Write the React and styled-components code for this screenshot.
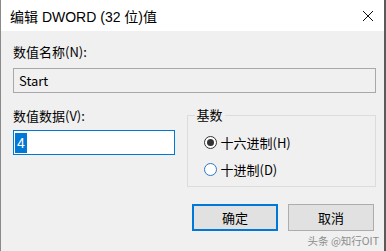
import React from 'react';
import styled, {createGlobalStyle} from 'styled-components';

const GlobalStyle = createGlobalStyle`
    html, body {
        margin: 0;
        padding: 0;
        background: #f0f0f0;
    }
    body {
        font-family: "Microsoft YaHei", "Noto Sans CJK SC", "Liberation Sans", sans-serif;
        font-size: 13px;
        color: #000;
    }
`

const Window = styled.div`
    width: 386px;
    height: 251px;
    box-sizing: border-box;
    border-left: 1px solid #8a8a8a;
    border-right: 2px solid #5a5a5a;
    background: #f0f0f0;
    display: flex;
    flex-direction: column;
    overflow: hidden;
`

const TitleBar = styled.div`
    height: 31px;
    background: #fff;
    display: flex;
    align-items: center;
    justify-content: space-between;
    padding: 0 10px 0 9px;
    flex-shrink: 0;
`

const Title = styled.span`
    font-size: 14px;
    font-family: "Segoe UI", "Liberation Sans", "Noto Sans CJK SC", sans-serif;
`

const CloseIcon = () => (
    <svg width="12" height="12" viewBox="0 0 12 12">
        <path d="M1 1 L11 11 M11 1 L1 11" stroke="#111" strokeWidth="1" />
    </svg>
)

const Body = styled.div`
    flex: 1;
    padding: 13px 8px 0 12px;
    position: relative;
`

const Label = styled.div`
    line-height: 16px;
    margin-bottom: ${p => p.gap || 8}px;
`

const NameBox = styled.div`
    height: 25px;
    box-sizing: border-box;
    border: 1px solid #a8a8a8;
    background: #f0f0f0;
    display: flex;
    align-items: center;
    padding-left: 5px;
    margin-bottom: 15px;
`

const Row = styled.div`
    display: flex;
    align-items: flex-start;
    gap: 12px;
`

const DataCol = styled.div`
    width: 162px;
`

const DataBox = styled.div`
    height: 25px;
    box-sizing: border-box;
    border: 1px solid #0078d7;
    background: #fff;
    display: flex;
    align-items: center;
    padding-left: 1px;
`

const Selected = styled.span`
    background: #0078d7;
    color: #fff;
    font-family: "Liberation Sans", sans-serif;
    font-size: 14px;
    line-height: 20px;
    padding: 0 2px;
`

const Group = styled.fieldset`
    margin: 0;
    width: 190px;
    height: 80px;
    box-sizing: border-box;
    border: 1px solid #dcdcdc;
    padding: 11px 0 0 16px;
    margin-top: -1px;
`

const Legend = styled.legend`
    padding: 0 2px;
    margin-left: -9px;
    line-height: 16px;
`

const RadioRow = styled.div`
    display: flex;
    align-items: center;
    gap: 4px;
    height: 16px;
    margin-bottom: 11px;
`

const RadioCircle = styled.span`
    width: 13px;
    height: 13px;
    border-radius: 50%;
    box-sizing: border-box;
    border: 1px solid ${p => p.checked ? '#333' : '#2b78c5'};
    background: #fff;
    display: flex;
    align-items: center;
    justify-content: center;
    &::after {
        content: '';
        width: 7px;
        height: 7px;
        border-radius: 50%;
        background: ${p => p.checked ? '#333' : 'transparent'};
    }
`

const Buttons = styled.div`
    display: flex;
    justify-content: flex-end;
    gap: 10px;
    margin-top: 17px;
    padding-right: 2px;
`

const Button = styled.div`
    width: 86px;
    height: 27px;
    box-sizing: border-box;
    background: #e1e1e1;
    border: ${p => p.primary ? '2px solid #0078d7' : '1px solid #adadad'};
    display: flex;
    align-items: center;
    justify-content: center;
`

const Watermark = styled.div`
    position: absolute;
    right: 5px;
    bottom: 3px;
    font-size: 10.5px;
    color: #8c8c8c;
    font-family: "Noto Sans CJK SC", sans-serif;
`

export default function App() {
    return (
        <>
            <GlobalStyle />
            <Window>
                <TitleBar>
                    <Title>编辑 DWORD (32 位)值</Title>
                    <CloseIcon />
                </TitleBar>
                <Body>
                    <Label>数值名称(N):</Label>
                    <NameBox>Start</NameBox>
                    <Row>
                        <DataCol>
                            <Label gap={6}>数值数据(V):</Label>
                            <DataBox><Selected>4</Selected></DataBox>
                        </DataCol>
                        <Group>
                            <Legend>基数</Legend>
                            <RadioRow><RadioCircle checked />十六进制(H)</RadioRow>
                            <RadioRow><RadioCircle />十进制(D)</RadioRow>
                        </Group>
                    </Row>
                    <Buttons>
                        <Button primary>确定</Button>
                        <Button>取消</Button>
                    </Buttons>
                    <Watermark>头条 @知行OIT</Watermark>
                </Body>
            </Window>
        </>
    )
}
